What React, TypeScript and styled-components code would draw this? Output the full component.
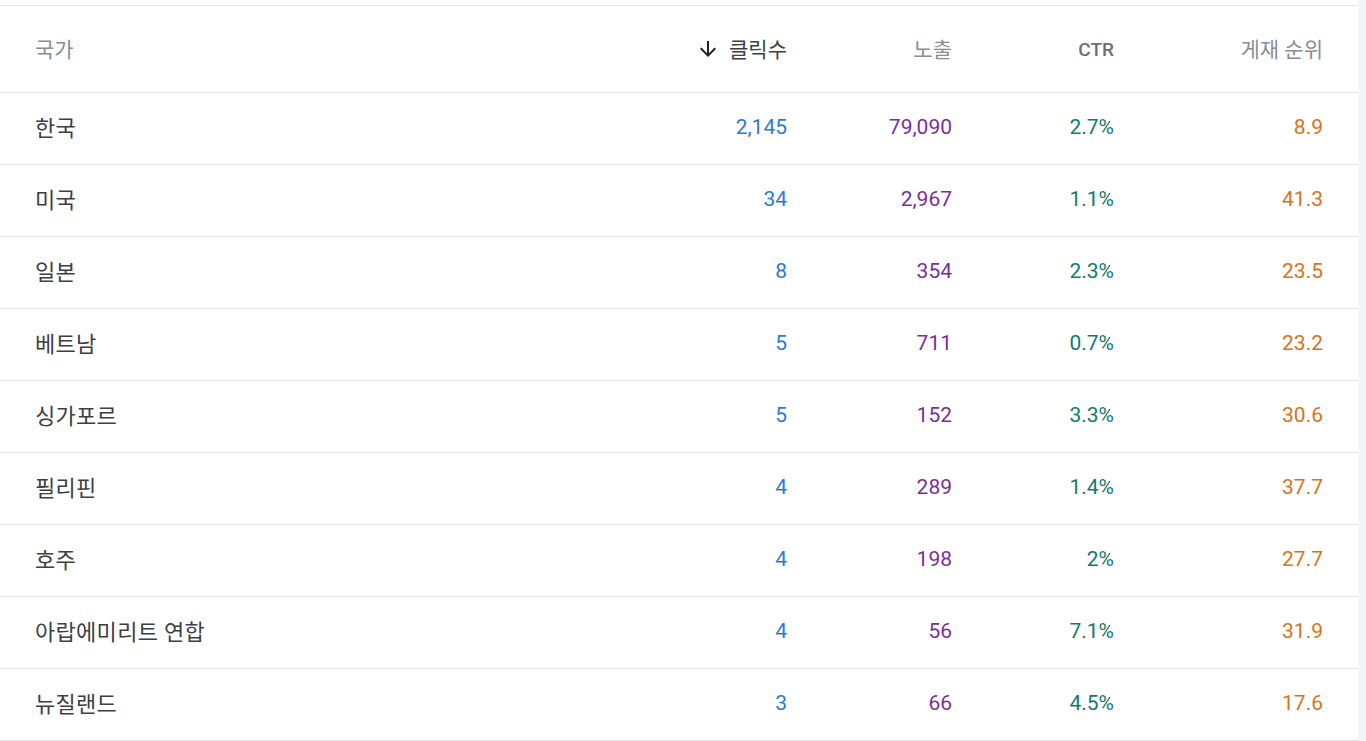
import React from "react";
import styled, { createGlobalStyle } from "styled-components";

const GlobalStyle = createGlobalStyle`
  html, body { margin: 0; padding: 0; background: #ffffff; }
  body { font-family: Roboto, "Noto Sans CJK KR", sans-serif; }
`;

const Page = styled.div`
  display: flex;
  width: 1366px;
  height: 741px;
  overflow: hidden;
  background: #ffffff;
`;

const TableArea = styled.div`
  width: 1358px;
  padding-top: 5px;
  flex: none;
`;

const ScrollStrip = styled.div`
  flex: 1;
  background: #f3f5f8;
`;

const Table = styled.div`
  border-top: 1px solid #e3e3e3;
`;

const Row = styled.div<{ $header?: boolean }>`
  display: grid;
  grid-template-columns: 552px 200px 165px 162px 209px;
  padding: 0 35px;
  height: ${(p) => (p.$header ? "86px" : "71px")};
  align-items: center;
  border-bottom: 1px solid #e3e3e3;
`;

const HeadCell = styled.div<{ $align?: "left" | "right"; $strong?: boolean; $dark?: boolean }>`
  display: flex;
  align-items: center;
  justify-content: ${(p) => (p.$align === "left" ? "flex-start" : "flex-end")};
  font-family: Roboto, "Noto Sans CJK KR", sans-serif;
  font-size: ${(p) => (p.$strong ? "19px" : "21px")};
  font-weight: ${(p) => (p.$strong ? 500 : 400)};
  color: ${(p) => (p.$dark ? "#3c4043" : p.$strong ? "#6b6f73" : "#8a8d91")};
  gap: 9px;
  margin-top: ${(p) => (p.$strong ? "1px" : "-3px")};
`;

const SortIcon = styled.svg`
  width: 24px;
  height: 24px;
  fill: #202124;
  flex: none;
  margin-top: 2px;
`;

const Country = styled.div`
  font-family: Roboto, "Noto Sans CJK KR", sans-serif;
  font-size: 22px;
  letter-spacing: 0.3px;
  color: #3c4043;
  margin-top: -6px;
`;

const Num = styled.div<{ $color: string }>`
  text-align: right;
  font-family: Roboto, sans-serif;
  font-size: 21px;
  color: ${(p) => p.$color};
  margin-top: -3px;
`;

const COLORS = {
  clicks: "#2a7ad2",
  impressions: "#7a2e9e",
  ctr: "#137a6c",
  position: "#d9731a",
};

const rows = [
  ["한국", "2,145", "79,090", "2.7%", "8.9"],
  ["미국", "34", "2,967", "1.1%", "41.3"],
  ["일본", "8", "354", "2.3%", "23.5"],
  ["베트남", "5", "711", "0.7%", "23.2"],
  ["싱가포르", "5", "152", "3.3%", "30.6"],
  ["필리핀", "4", "289", "1.4%", "37.7"],
  ["호주", "4", "198", "2%", "27.7"],
  ["아랍에미리트 연합", "4", "56", "7.1%", "31.9"],
  ["뉴질랜드", "3", "66", "4.5%", "17.6"],
];

export default function App() {
  return (
    <>
      <GlobalStyle />
      <Page>
        <TableArea>
          <Table>
            <Row $header>
              <HeadCell $align="left">국가</HeadCell>
              <HeadCell $dark>
                <SortIcon viewBox="0 0 24 24">
                  <path d="M20 12l-1.41-1.41L13 16.17V4h-2v12.17l-5.58-5.59L4 12l8 8 8-8z" />
                </SortIcon>
                클릭수
              </HeadCell>
              <HeadCell>노출</HeadCell>
              <HeadCell $strong>CTR</HeadCell>
              <HeadCell>게재 순위</HeadCell>
            </Row>
            {rows.map((r) => (
              <Row key={r[0]}>
                <Country>{r[0]}</Country>
                <Num $color={COLORS.clicks}>{r[1]}</Num>
                <Num $color={COLORS.impressions}>{r[2]}</Num>
                <Num $color={COLORS.ctr}>{r[3]}</Num>
                <Num $color={COLORS.position}>{r[4]}</Num>
              </Row>
            ))}
          </Table>
        </TableArea>
        <ScrollStrip />
      </Page>
    </>
  );
}
